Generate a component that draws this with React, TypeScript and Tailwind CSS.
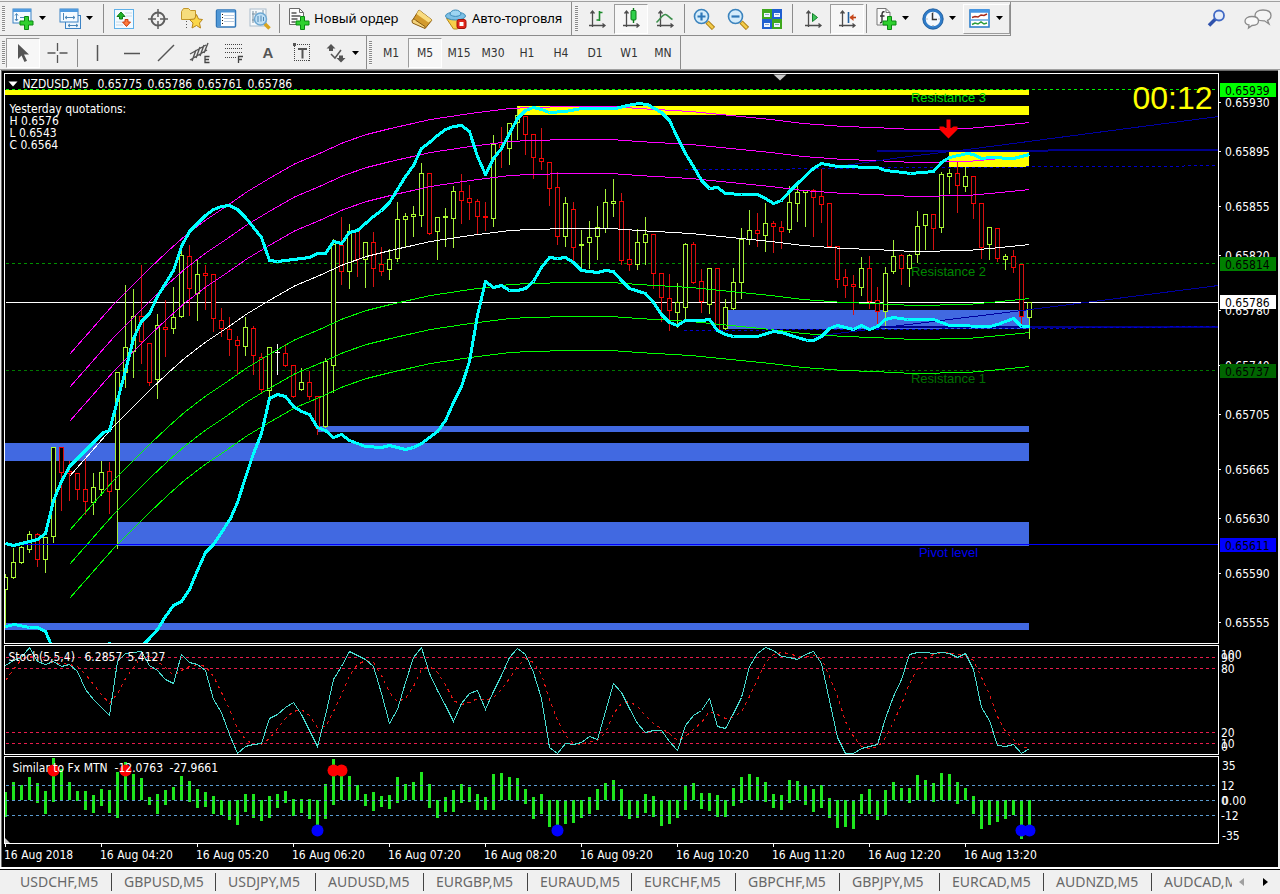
import React from 'react';
import clsx from 'clsx';

// high, body top, body bottom, low, kind (1 = up, 0 = down, 2 = doji); one entry per 8px bar
const CANDLES: number[][] = [
    [573, 577, 589, 626, 1], [547, 562, 577, 577, 1], [545, 547, 562, 562, 1], [530, 534, 549, 551, 1],
    [532, 534, 559, 565, 0], [537, 537, 559, 571, 1], [447, 447, 536, 541, 1], [447, 447, 472, 509, 0],
    [460, 471, 473, 499, 0], [472, 473, 489, 498, 0], [457, 489, 501, 513, 0], [472, 487, 502, 513, 1],
    [460, 472, 489, 494, 1], [461, 471, 491, 512, 0], [372, 372, 489, 547, 1], [284, 347, 372, 386, 1],
    [288, 316, 351, 376, 1], [264, 316, 341, 362, 0], [342, 343, 382, 384, 0], [313, 325, 379, 397, 1],
    [299, 327, 329, 355, 0], [286, 317, 328, 332, 1], [248, 255, 316, 316, 1], [244, 256, 288, 314, 0],
    [259, 274, 293, 319, 1], [264, 273, 275, 308, 0], [274, 274, 318, 330, 0], [307, 320, 328, 335, 0],
    [316, 329, 339, 354, 0], [335, 340, 345, 373, 0], [316, 327, 346, 354, 1], [325, 328, 355, 373, 0],
    [352, 357, 389, 392, 0], [347, 347, 390, 397, 1], [343, 352, 352, 373, 2], [343, 353, 365, 365, 0],
    [365, 365, 396, 396, 0], [367, 382, 389, 389, 1], [370, 382, 396, 398, 0], [396, 396, 427, 433, 0],
    [357, 361, 426, 426, 1], [238, 244, 365, 391, 1], [216, 245, 271, 283, 0], [223, 231, 271, 287, 1],
    [231, 231, 259, 275, 0], [242, 242, 259, 286, 1], [231, 242, 268, 285, 0], [246, 264, 271, 274, 0],
    [248, 259, 269, 278, 1], [201, 219, 258, 260, 1], [212, 216, 219, 246, 1], [205, 214, 216, 235, 1],
    [162, 173, 215, 225, 1], [173, 173, 233, 233, 0], [217, 217, 231, 258, 1], [207, 216, 217, 245, 1],
    [185, 191, 218, 246, 1], [173, 191, 200, 222, 0], [184, 198, 202, 218, 0], [198, 201, 216, 232, 0],
    [201, 216, 217, 229, 0], [134, 144, 218, 225, 1], [126, 144, 147, 166, 0], [122, 123, 148, 163, 1],
    [106, 115, 122, 138, 1], [116, 116, 134, 153, 0], [134, 134, 157, 177, 0], [127, 158, 161, 168, 0],
    [162, 162, 188, 204, 0], [171, 187, 236, 243, 0], [196, 203, 236, 245, 1], [201, 209, 247, 261, 0],
    [229, 244, 245, 267, 1], [220, 237, 242, 267, 1], [205, 227, 236, 258, 1], [188, 202, 228, 231, 1],
    [178, 201, 203, 215, 1], [192, 201, 260, 263, 0], [228, 259, 264, 269, 0], [228, 242, 264, 268, 1],
    [216, 234, 242, 263, 1], [234, 234, 273, 287, 0], [273, 273, 297, 320, 0], [273, 298, 310, 329, 0],
    [282, 302, 312, 326, 1], [242, 244, 307, 317, 1], [241, 244, 282, 282, 0], [268, 281, 301, 311, 0],
    [267, 268, 304, 312, 1], [268, 268, 329, 329, 0], [298, 307, 328, 328, 1], [267, 282, 308, 308, 1],
    [227, 239, 282, 297, 1], [209, 230, 239, 243, 1], [212, 230, 233, 245, 0], [202, 223, 235, 250, 1],
    [220, 223, 226, 251, 0], [220, 227, 231, 247, 0], [185, 202, 229, 231, 1], [183, 192, 203, 220, 1],
    [189, 190, 192, 225, 1], [188, 190, 197, 235, 0], [168, 196, 204, 221, 0], [203, 203, 246, 246, 0],
    [246, 246, 279, 286, 0], [268, 277, 285, 296, 0], [274, 284, 286, 313, 0], [256, 268, 287, 294, 1],
    [255, 268, 301, 307, 0], [286, 300, 311, 326, 0], [266, 273, 311, 327, 1], [239, 256, 271, 272, 1],
    [253, 255, 268, 283, 0], [253, 255, 268, 285, 1], [210, 226, 254, 261, 1], [213, 214, 225, 248, 1],
    [213, 214, 228, 248, 0], [171, 174, 227, 231, 1], [168, 173, 176, 192, 1], [160, 173, 185, 211, 0],
    [166, 176, 186, 190, 1], [176, 176, 203, 217, 0], [203, 203, 247, 257, 0], [227, 227, 244, 258, 1],
    [227, 228, 258, 260, 0], [253, 256, 259, 268, 1], [249, 256, 267, 271, 0], [264, 264, 316, 324, 0],
    [302, 302, 317, 337, 1],
];

const UPPER_BAND =
    '5,543 13,545 21,543 29,541 37,539 45,533 53,500 61,481 69,466 103,432 109,430 117,400 125,370 133,338 141,321 149,313 157,296 165,283 173,270 181,246 189,231 197,223 205,215 213,209 221,206 229,205 237,209 245,217 253,227 261,237 269,260 277,261 293,259 309,257 317,253 325,253 333,241 341,243 349,232 357,230 365,223 373,216 381,210 389,202 397,189 405,176 413,165 421,148 429,142 437,135 445,129 453,126 461,125 469,131 477,156 485,174 493,158 501,148 509,133 517,118 525,110 533,107 541,109 549,112 565,111 581,108 615,108 627,105 638,103 647,104 661,112 669,120 677,137 685,153 693,166 701,180 709,188 717,187 725,193 741,194 757,194 765,198 773,203 781,200 789,191 797,183 813,168 821,163 837,166 877,167 885,170 903,172 910,173 933,171 941,162 949,157 967,153 973,154 981,158 990,157 1013,158 1029,154';
const LOWER_BAND =
    '5,626 14,624 29,627 37,627 45,631 51,645 60,660 100,660 109,643 117,660 140,647 149,638 157,629 165,616 173,605 181,601 189,589 197,570 205,552 213,544 221,532 230,518 237,502 245,477 253,453 261,433 269,398 277,394 285,396 293,406 301,411 309,414 317,427 325,430 333,437 341,434 349,440 365,446 381,447 389,445 405,449 413,447 421,443 437,431 445,420 453,402 461,386 469,361 477,315 485,281 493,287 501,285 509,290 517,290 525,288 533,281 541,267 549,257 557,258 565,257 573,262 581,270 589,271 597,272 605,270 613,271 621,280 629,288 645,293 653,302 661,314 669,322 677,325 685,320 701,320 709,319 717,330 725,334 733,336 757,336 773,331 781,332 797,337 807,340 813,340 821,336 829,328 837,325 853,329 861,325 869,329 877,326 885,319 893,317 907,319 933,319 949,325 990,326 997,324 1013,318 1021,326 1029,326';
const CHANNEL =
    '69,354 91,329 113,304 131,286 149,268 167,251 185,235 206,219 227,205 247,191 267,179 295,163 319,153 343,142 366,134 390,128 430,119 470,113 510,108 530,107 570,106 610,106 638,108 690,111 730,115 770,119 803,123 843,126 873,127 913,129 967,128 1000,125 1029,122';
const CHANNEL_LINES = [
    { shift: 0, color: '#f0f' }, { shift: 33, color: '#f0f' }, { shift: 67, color: '#f0f' },
    { shift: 122, color: '#fff' },
    { shift: 176, color: '#0f0' }, { shift: 210, color: '#0f0' }, { shift: 244, color: '#0f0' },
];

// x, y, height, color; every zone runs to the last bar
const ZONES: [number, number, number, string][] = [
    [5, 90, 5, '#ff0'], [517, 106, 9, '#ff0'], [949, 151, 16, '#ff0'],
    [728, 310, 19, '#4169e1'], [317, 426, 6, '#4169e1'], [5, 443, 18, '#4169e1'],
    [117, 522, 24, '#4169e1'], [5, 623, 7, '#4169e1'],
];

const STOCH_MAIN = [
    665, 660, 657, 647, 661, 664, 661, 666, 664, 671, 689, 699, 707, 715, 661, 653, 652, 651, 665, 670, 679, 683, 654, 662, 664, 670,
    699, 712, 734, 753, 746, 744, 743, 718, 714, 707, 702, 714, 730, 746, 715, 679, 666, 651, 655, 659, 666, 693, 723, 709, 682, 657,
    647, 673, 690, 705, 721, 703, 693, 690, 709, 691, 675, 657, 648, 654, 672, 698, 747, 753, 743, 744, 742, 736, 739, 711, 683, 692,
    708, 723, 732, 730, 730, 741, 750, 725, 715, 710, 698, 726, 728, 713, 697, 666, 653, 647, 650, 656, 657, 659, 654, 651, 663, 700,
    737, 753, 753, 748, 746, 744, 718, 696, 679, 654, 652, 652, 653, 652, 653, 657, 653, 669, 707, 720, 745, 746, 744, 753, 748,
];
const STOCH_SIGNAL = [
    680, 669, 659, 656, 657, 660, 662, 663, 664, 666, 674, 684, 694, 703, 693, 678, 667, 656, 656, 661, 667, 675, 670, 666, 664, 666,
    676, 692, 709, 728, 739, 744, 744, 738, 728, 718, 711, 709, 715, 727, 726, 711, 694, 675, 664, 660, 662, 675, 692, 701, 698, 686,
    669, 666, 672, 684, 700, 704, 702, 698, 700, 697, 689, 678, 666, 658, 662, 674, 699, 720, 735, 743, 744, 741, 740, 732, 713, 703,
    701, 706, 715, 723, 728, 733, 740, 736, 729, 722, 711, 714, 718, 717, 711, 696, 679, 662, 654, 652, 653, 656, 656, 655, 658, 676,
    696, 721, 736, 746, 748, 747, 737, 722, 704, 683, 668, 658, 654, 652, 652, 654, 655, 660, 677, 694, 716, 731, 739, 746, 748,
];

// top and bottom of every histogram bar
const HISTOGRAM: [number, number][] = [
    [792, 817], [782, 800], [785, 800], [777, 800], [783, 803], [791, 814], [758, 802], [769, 800], [782, 800], [791, 801],
    [791, 810], [795, 813], [789, 806], [790, 813], [772, 818], [762, 800], [774, 800], [778, 800], [797, 805], [794, 814],
    [790, 805], [787, 800], [776, 800], [781, 802], [789, 808], [792, 807], [796, 814], [800, 815], [800, 820], [800, 825],
    [794, 812], [794, 818], [800, 821], [796, 818], [794, 808], [791, 803], [799, 816], [799, 813], [799, 819], [800, 826],
    [784, 819], [759, 805], [770, 800], [776, 800], [785, 800], [794, 806], [792, 811], [796, 807], [795, 809], [777, 803],
    [784, 800], [782, 800], [772, 800], [784, 808], [800, 818], [797, 812], [790, 812], [784, 803], [787, 802], [794, 810],
    [797, 810], [774, 810], [773, 800], [777, 800], [778, 800], [789, 804], [797, 819], [794, 814], [800, 827], [800, 826],
    [800, 824], [800, 823], [800, 818], [797, 814], [789, 810], [783, 800], [780, 800], [789, 816], [800, 819], [800, 818],
    [794, 813], [796, 817], [800, 826], [800, 824], [800, 818], [785, 810], [783, 800], [793, 809], [793, 811], [795, 817],
    [800, 817], [788, 806], [777, 803], [774, 800], [777, 800], [782, 802], [794, 808], [795, 810], [780, 803], [781, 800],
    [786, 805], [789, 812], [785, 808], [798, 818], [800, 828], [800, 827], [800, 829], [794, 814], [789, 814], [800, 820],
    [790, 815], [782, 800], [788, 800], [788, 803], [775, 800], [780, 800], [783, 802], [773, 800], [774, 800], [782, 804],
    [788, 800], [796, 814], [800, 829], [800, 825], [800, 822], [800, 819], [800, 815], [800, 839], [800, 825],
];

const PRICES: [string, number][] = [
    ['0.65930', 102], ['0.65895', 151], ['0.65855', 206], ['0.65820', 255], ['0.65780', 310], ['0.65740', 365],
    ['0.65705', 414], ['0.65665', 469], ['0.65630', 518], ['0.65590', 573], ['0.65555', 622],
];
const PRICE_TAGS = [
    { text: '0.65939', y: 90, bg: '#0f0', color: '#000' },
    { text: '0.65814', y: 264, bg: '#008000', color: '#000' },
    { text: '0.65786', y: 302, bg: '#fff', color: '#000' },
    { text: '0.65737', y: 371, bg: '#006400', color: '#000' },
    { text: '0.65611', y: 545, bg: '#00f', color: '#000' },
];
const QUOTES: [string, number][] = [['0.65775', 97], ['0.65786', 147], ['0.65761', 197], ['0.65786', 247]];
const TIMES = ['2018', '04:20', '05:20', '06:20', '07:20', '08:20', '09:20', '10:20', '11:20', '12:20', '13:20'];

const TABS: [string, string][] = [
    ['USDCHF,M5', 'w-[104px]'], ['GBPUSD,M5', 'w-[104px]'], ['USDJPY,M5', 'w-[100px]'], ['AUDUSD,M5', 'w-[108px]'],
    ['EURGBP,M5', 'w-[104px]'], ['EURAUD,M5', 'w-[104px]'], ['EURCHF,M5', 'w-[104px]'], ['GBPCHF,M5', 'w-[104px]'],
    ['GBPJPY,M5', 'w-[100px]'], ['EURCAD,M5', 'w-[104px]'], ['AUDNZD,M5', 'w-[108px]'], ['AUDCAD,M5', 'w-[108px]'],
];

const barX = (i: number) => 5 + i * 8;
const toPoints = (ys: number[]) => ys.map((y, i) => `${barX(i)},${y}`).join(' ');

/* ---------- toolbar icons ---------- */

const Icon = ({ children }: { children: React.ReactNode }) => (
    <svg width="22" height="22" viewBox="0 0 22 22" fill="none" className="shrink-0">{children}</svg>
);

const GreenPlus = () => (
    <path d="M12.5 8.500h4v4.500h4.500v4h-4.500v4.500h-4v-4.500H8v-4h4.500z" fill="#2fd02f" stroke="#0a8a12" />
);

const Axes = () => (
    <path d="M6.5 3v16M3 17.5h16M4.5 5.5l2-2.5 2 2.5M16.5 15.5l2.5 2-2.5 2" stroke="#4d4d4d" strokeWidth="1.3" />
);

const IconNewChart = () => (
    <Icon>
        <rect x="1" y="1" width="18" height="14" fill="#f4faff" stroke="#3b82c4" />
        <path d="M1 2.5h18" stroke="#4f9be0" strokeWidth="3" />
        <path d="M4.5 6v6M3 7.5l1.5-2 1.5 2M3 11l1.5 2 1.5-2M8 9.5h5" stroke="#4a86b8" />
        <GreenPlus />
    </Icon>
);
const IconProfiles = () => (
    <Icon>
        <rect x="6.5" y="7.5" width="15" height="13" fill="#eef6fd" stroke="#3b82c4" />
        <path d="M9 17.5h10M11 16l-2 1.5 2 1.5M17 16l2 1.5-2 1.5" stroke="#4a86b8" />
        <rect x="1" y="1" width="18" height="13" fill="#f4faff" stroke="#3b82c4" />
        <path d="M1 2.5h18" stroke="#4f9be0" strokeWidth="3" />
        <path d="M4.5 5v7M6 9.5h10M8 8l-2 1.5 2 1.5M14 8l2 1.5-2 1.5" stroke="#4a86b8" />
    </Icon>
);
const IconMarket = () => (
    <Icon>
        <rect x="1.5" y="1.5" width="19" height="19" fill="#f3faff" stroke="#5fb0e8" />
        <path d="M12 5h7M13 8h6M3 14h6M3 17h7" stroke="#c8d8e4" />
        <path d="M8 4l4 4.5H9.5v2.500h-3V8.500H4z" fill="#21b32a" stroke="#0d7a15" />
        <path d="M13.5 18.5l-4-4.5H12v-2.500h3V14h2.500z" fill="#ff7a3c" stroke="#c83c10" />
    </Icon>
);
const IconTarget = () => (
    <Icon>
        <circle cx="11" cy="11" r="6.5" stroke="#5e5e5e" strokeWidth="2" />
        <path d="M11 1v8M11 13v8M1 11h8M13 11h8" stroke="#5e5e5e" strokeWidth="1.5" />
    </Icon>
);
const IconFavorites = () => (
    <Icon>
        <path d="M.5 3.5l2-3h5l2 2h5v9H.5z" fill="#f6dc7c" stroke="#c2962a" />
        <path d="M5.5 13v8" stroke="#555" strokeDasharray="1 2" />
        <path d="M15.5 6.5l2 4.5 4 .5-3 3.500 1 5-4-2.500-4.500 2.500 1-5-3.500-3.500 5-.5z" fill="#fbd749" stroke="#b8861b" />
    </Icon>
);
const IconNavigator = () => (
    <Icon>
        <rect x="1.5" y="2" width="19" height="17" rx="1" fill="#fff" stroke="#2f76b8" strokeWidth="1.5" />
        <path d="M4 3v15" stroke="#4f97d6" strokeWidth="4" />
        <path d="M2 3.5h18" stroke="#4f97d6" strokeWidth="2" />
        <path d="M9 7.5h10M9 10.5h10M9 13.5h10" stroke="#b9cbe0" />
        <path d="M7.5 6v11" stroke="#111" strokeDasharray="1 2" />
    </Icon>
);
const IconTester = () => (
    <Icon>
        <rect x="1" y="1" width="16" height="17" fill="#f6f9fb" stroke="#a9bccb" />
        <path d="M4 3v12M3 6h3M7 3v5M3 12h4M14 2v5" stroke="#7790a3" />
        <path d="M15.5 15.5l5 5" stroke="#d9a520" strokeWidth="3.5" />
        <circle cx="11.5" cy="11" r="6" fill="#bfe0f6" stroke="#6ea8d2" strokeWidth="1.5" />
        <path d="M9 8v6M12 7.5v6M14.5 9v4" stroke="#4f87b4" />
    </Icon>
);
const IconOrder = () => (
    <Icon>
        <path d="M1.5.5h10l4 4v12h-14z" fill="#fdfdfd" stroke="#6a6a6a" />
        <path d="M11.5.5v4h4" stroke="#6a6a6a" />
        <path d="M3.5 5h5M3.5 8h9M3.5 11h6M3.5 14h4" stroke="#555" strokeWidth="1.5" />
        <GreenPlus />
    </Icon>
);
const IconBook = () => (
    <Icon>
        <path d="M1 13L8 2l13 10-6.500 8z" fill="#d39a2c" stroke="#8a5d12" />
        <path d="M8 2l13 10-3.500 2.500L5.500 6z" fill="#f9dc80" />
        <path d="M1 13c.5-2 3-2.500 4-.5L14 18.500v2L1.500 15z" fill="#f3d27a" stroke="#8a5d12" />
    </Icon>
);
const IconExpert = () => (
    <Icon>
        <path d="M1.5 10.500l17 0-6 10.500h-4z" fill="#f7cf4a" stroke="#b68818" />
        <ellipse cx="10.5" cy="8" rx="10" ry="4" fill="#7cc0e6" stroke="#3d8bb8" />
        <path d="M5 6.5C5 .5 16 .5 16 6.5c-3 2.500-8 2.500-11 0z" fill="#9dd5f2" stroke="#3d8bb8" />
        <rect x="12" y="11.5" width="9" height="9" rx="2" fill="#e0261a" stroke="#a01008" />
        <rect x="14.5" y="14" width="4" height="4" fill="#fff" />
    </Icon>
);
const IconBars = () => (
    <Icon>
        <Axes />
        <path d="M13.5 3v10M10.5 12h3M13.5 4.5h3" stroke="#1b8a2a" strokeWidth="1.6" />
    </Icon>
);
const IconCandles = () => (
    <Icon>
        <Axes />
        <path d="M13.5 0v15" stroke="#0b7a18" strokeWidth="1.4" />
        <rect x="11" y="2.5" width="5" height="9.5" rx="1" fill="#2fd04a" stroke="#0b7a18" />
    </Icon>
);
const IconLine = () => (
    <Icon>
        <Axes />
        <path d="M2.5 14.5C7 10 9 6 11.5 6.5s4 3.5 7 5" stroke="#3c8f4c" strokeWidth="1.5" />
    </Icon>
);
const IconZoom = ({ plus }: { plus?: boolean }) => (
    <Icon>
        <path d="M14 14l6.5 6.5" stroke="#a97a10" strokeWidth="4.5" />
        <path d="M14.5 14.5l5.5 5.5" stroke="#f2cb4a" strokeWidth="2.5" />
        <circle cx="8.5" cy="8.5" r="7" fill="#d4ecfb" stroke="#3b83bd" strokeWidth="1.6" />
        <path d={plus ? 'M4.5 8.5h8M8.5 4.5v8' : 'M4.5 8.5h8'} stroke="#2f78b8" strokeWidth="2.2" />
    </Icon>
);
const IconTiles = () => (
    <Icon>
        <rect x="1" y="1" width="10" height="10" fill="#3fa81e" />
        <rect x="11" y="1" width="10" height="10" fill="#1f5fd0" />
        <rect x="1" y="11" width="10" height="10" fill="#1f5fd0" />
        <rect x="11" y="11" width="10" height="10" fill="#3fa81e" />
        <path d="M3 5h6v4H3zM13 5h6v4h-6zM3 15h6v4H3zM13 15h6v4h-6z" fill="#eef6ff" />
        <path d="M4 6.5h4M14 6.500h4M4 16.5h4M14 16.5h4" stroke="#8aa8c8" />
    </Icon>
);
const IconScroll = () => (
    <Icon>
        <Axes />
        <path d="M10.5 5.5v8l5-4z" fill="#3fc45a" stroke="#12802a" />
    </Icon>
);
const IconShift = () => (
    <Icon>
        <Axes />
        <path d="M12.5 4v11" stroke="#1f5e9e" strokeWidth="1.6" />
        <path d="M14 9.5h6" stroke="#b83a10" strokeWidth="1.6" />
        <path d="M17.500 6v7L13.500 9.500z" fill="#c8481a" />
    </Icon>
);
const IconIndicators = () => (
    <Icon>
        <path d="M2 .5h9l4 4v12.5H2z" fill="#fafafa" stroke="#777" />
        <path d="M11 .5v4h4" stroke="#777" />
        <path d="M9.5 4c-2-1-2.5 1-2.5 3v6c0 1.5-1 2-2 1.5M5 8h4.5" stroke="#333" strokeWidth="1.4" />
        <GreenPlus />
    </Icon>
);
const IconClock = () => (
    <Icon>
        <circle cx="11" cy="11" r="8.8" fill="#f4f9fe" stroke="#2f7cc9" strokeWidth="3" />
        <circle cx="11" cy="11" r="10.2" stroke="#1b5795" strokeWidth=".8" />
        <path d="M10.5 5v6.5h4.5" stroke="#333" strokeWidth="1.5" />
        <path d="M11 4v1M11 17v1M4.5 11h1M16.5 11h1" stroke="#888" />
    </Icon>
);
const IconTemplate = () => (
    <Icon>
        <rect x="1" y="2" width="19" height="17" fill="#fff" stroke="#2f80cc" strokeWidth="1.6" />
        <path d="M1 3h19" stroke="#4496e4" strokeWidth="3.5" />
        <path d="M1 12h19" stroke="#5da5e2" strokeWidth="1.5" />
        <path d="M3 9.500l3-1 3 .5 3-2 3 .5 3-1.500" stroke="#a82a1a" strokeWidth="1.5" />
        <path d="M3 16.500l3-1.500 3 1 3-2 3 2 3-1" stroke="#2c9c3c" strokeWidth="1.5" />
    </Icon>
);
const IconSearch = () => (
    <Icon>
        <path d="M3 17.5l6.5-6.5" stroke="#2f52ac" strokeWidth="3.5" />
        <circle cx="13" cy="7.5" r="5" fill="#e6edf9" stroke="#4169c4" strokeWidth="1.8" />
    </Icon>
);
const IconChat = () => (
    <svg width="28" height="22" viewBox="0 0 28 22" fill="none">
        <path d="M19 2c5 0 8 2 8 5.5 0 2.5-1.5 4-3.5 4.8l1.5 3.7-4.5-3.2C14 13 11 11 11 7.5S14 2 19 2z" fill="#f4f4f4" stroke="#8a8a8a" strokeWidth="1.3" />
        <path d="M8 8.5c4 0 6.5 1.8 6.5 4.5S12 17.5 8 17.5l-3.5 2.5.5-3C2.5 16.5 1 15 1 13c0-2.7 3-4.5 7-4.5z" fill="#f8f8f8" stroke="#8a8a8a" strokeWidth="1.3" />
    </svg>
);

const IconCursor = () => (
    <Icon><path d="M6 2v15l3.5-3.5 3 6.5 2.5-1.2-3-6.3H17z" fill="#555" /></Icon>
);
const IconCross = () => (
    <Icon><path d="M11.5 1v8M11.5 13v8M1.5 11h8M13.5 11h8" stroke="#555" strokeWidth="1.3" /></Icon>
);
const IconVLine = () => (
    <Icon><path d="M10.5 3v16" stroke="#555" strokeWidth="1.5" /></Icon>
);
const IconHLine = () => (
    <Icon><path d="M3 11.5h16" stroke="#555" strokeWidth="1.5" /></Icon>
);
const IconTrend = () => (
    <Icon><path d="M3 19L19 3" stroke="#555" strokeWidth="1.5" /></Icon>
);
const IconChannel = () => (
    <Icon>
        <path d="M1 12L17 3M1 18L18 8M3 19l4-11M7 16l4-11M11 14l4-11M15 11l4-10" stroke="#555" strokeWidth="1.4" />
        <path d="M20.5 14.5H16v6h4.5M16 17.5h4" stroke="#444" strokeWidth="1.3" />
    </Icon>
);
const IconFibo = () => (
    <Icon>
        <path d="M2 2.5h18M2 6.5h18M2 10.5h18M2 15.5h11" stroke="#444" strokeDasharray="1 1" />
        <path d="M15.5 21v-6.5H20M15.5 17.5H19" stroke="#444" strokeWidth="1.3" />
    </Icon>
);
const IconLabel = () => (
    <Icon>
        <rect x="3.5" y="2.5" width="15" height="16" stroke="#444" strokeDasharray="1 1" shapeRendering="crispEdges" />
        <path d="M2 1h3v3H2z" fill="#555" />
        <path d="M7 7h9M11.5 7v9.5" stroke="#555" strokeWidth="2" />
    </Icon>
);
const IconShapes = () => (
    <Icon>
        <path d="M6 2l4.500 4.500H8V9H4V6.500H1.500zM16 20.500L11.500 16H14v-2.500h4V16h2.500z" fill="#555" />
        <path d="M6 12l4 4 6-8" stroke="#555" strokeWidth="1.5" />
    </Icon>
);

/* ---------- toolbar pieces ---------- */

const Grip = () => (
    <div className="mx-[2px] my-[4px] w-[3px] shrink-0 self-stretch bg-[repeating-linear-gradient(to_bottom,#8a8a8a_0px,#8a8a8a_1px,#f8f8f8_1px,#f8f8f8_2px)]" />
);
const Sep = ({ wide }: { wide?: boolean }) => (
    <div className={clsx('flex shrink-0 justify-center self-stretch py-[2px]', wide ? 'w-[7px]' : 'w-[5px]')}>
        <div className="w-px bg-[#8c8c8c]" />
    </div>
);

interface ToolProps {
    label: string;
    pressed?: boolean;
    children: React.ReactNode;
}

const Tool = ({ label, pressed, children }: ToolProps) => (
    <button
        title={label}
        aria-label={label}
        className={clsx(
            'flex h-[30px] w-[34px] shrink-0 items-center justify-center border',
            pressed ? 'border-t-[#9c9c9c] border-r-white border-b-white border-l-[#9c9c9c] bg-[#f7f7f7]' : 'border-transparent',
        )}
    >
        {children}
    </button>
);

const DropTool = ({ label, raised, children }: ToolProps & { raised?: boolean }) => (
    <button
        title={label}
        aria-label={label}
        className={clsx(
            'flex h-[30px] w-[47px] shrink-0 items-center gap-[5px] border pl-[5px]',
            raised ? 'border-t-white border-r-[#9c9c9c] border-b-[#9c9c9c] border-l-white' : 'border-transparent',
        )}
    >
        {children}
        <svg width="8" height="5" viewBox="0 0 8 5"><path d="M0 0h7L3.5 4z" fill="#000" /></svg>
    </button>
);

const TopToolbar = () => (
    <div className="flex items-center justify-between pr-2">
        <div className="flex h-[34px]">
            <div className="flex items-center border-r border-b border-[#8c8c8c]">
                <Grip />
                <div className="-ml-px flex items-center self-stretch">
                    <DropTool label="Новый график"><IconNewChart /></DropTool>
                    <DropTool label="Профили"><IconProfiles /></DropTool>
                    <Sep wide />
                    <Tool label="Обзор рынка"><IconMarket /></Tool>
                    <Tool label="Окно данных"><IconTarget /></Tool>
                    <Tool label="Избранное"><IconFavorites /></Tool>
                    <Tool label="Навигатор"><IconNavigator /></Tool>
                    <Tool label="Тестер стратегий"><IconTester /></Tool>
                    <Sep />
                    <button className="flex h-[30px] w-[123px] items-center gap-1 pl-[6px] font-['Noto_Sans',sans-serif] text-[13px] whitespace-nowrap text-black">
                        <IconOrder />
                        Новый ордер
                    </button>
                    <Tool label="Редактор"><IconBook /></Tool>
                    <button className="flex h-[30px] w-[132px] items-center gap-[5px] pl-[6px] font-['Noto_Sans',sans-serif] text-[13px] whitespace-nowrap text-black">
                        <IconExpert />
                        Авто-торговля
                    </button>
                </div>
            </div>
            <div className="flex items-center border-r border-b border-[#8c8c8c] pl-px">
                <Grip />
                <Tool label="Бары"><IconBars /></Tool>
                <Tool label="Японские свечи" pressed><IconCandles /></Tool>
                <Tool label="Линия"><IconLine /></Tool>
                <Sep />
                <Tool label="Увеличить"><IconZoom plus /></Tool>
                <Tool label="Уменьшить"><IconZoom /></Tool>
                <Tool label="Окна мозаикой"><IconTiles /></Tool>
                <Sep wide />
                <Tool label="Автопрокрутка"><IconScroll /></Tool>
                <Tool label="Сдвиг графика" pressed><IconShift /></Tool>
                <Sep />
                <DropTool label="Индикаторы"><IconIndicators /></DropTool>
                <DropTool label="Периоды"><IconClock /></DropTool>
                <DropTool label="Шаблоны" raised><IconTemplate /></DropTool>
            </div>
        </div>
        <div className="flex items-center gap-4">
            <button title="Поиск" aria-label="Поиск"><IconSearch /></button>
            <button title="Сообщения" aria-label="Сообщения"><IconChat /></button>
        </div>
    </div>
);

const TIMEFRAMES = ['M1', 'M5', 'M15', 'M30', 'H1', 'H4', 'D1', 'W1', 'MN'];

const DrawToolbar = () => (
    <div className="flex h-[33px]">
        <div className="flex items-center border-r border-[#8c8c8c] pt-px">
            <Grip />
            <div className="-ml-px flex items-center self-stretch">
                <Tool label="Курсор" pressed><IconCursor /></Tool>
                <Tool label="Перекрестие"><IconCross /></Tool>
                <Sep wide />
                <Tool label="Вертикальная линия"><IconVLine /></Tool>
                <Tool label="Горизонтальная линия"><IconHLine /></Tool>
                <Tool label="Трендовая линия"><IconTrend /></Tool>
                <Tool label="Канал"><IconChannel /></Tool>
                <Tool label="Фибоначчи"><IconFibo /></Tool>
                <Tool label="Текст">
                    <span className="font-['Liberation_Sans',sans-serif] text-[15px] font-bold text-[#555]">A</span>
                </Tool>
                <Tool label="Метка"><IconLabel /></Tool>
                <DropTool label="Стрелки"><IconShapes /></DropTool>
            </div>
        </div>
        <div className="flex items-center border-r border-[#8c8c8c] pt-px">
            <Grip />
            {TIMEFRAMES.map(tf => (
                <Tool key={tf} label={tf} pressed={tf === 'M5'}>
                    <span className="font-['DejaVu_Sans_Condensed','DejaVu_Sans',sans-serif] text-[12px] text-[#333]">{tf}</span>
                </Tool>
            ))}
        </div>
    </div>
);

/* ---------- chart ---------- */

const Candle = ({ x, data }: { x: number, data: number[] }) => {
    const [high, top, bottom, low, kind] = data;
    const edge = kind === 1 ? '#adff2f' : kind === 2 ? '#fff' : '#f00';
    const side = kind === 1 ? '#a6f03a' : kind === 2 ? '#fff' : '#d41212';
    return (
        <g>
            <path d={`M${x} ${high}V${low + 1}`} stroke={side} />
            {bottom - top > 1 && <rect x={x - 2} y={top} width="4" height={bottom - top} fill="#000" stroke={side} />}
            <path d={`M${x - 2.5} ${top}h5M${x - 2.5} ${bottom}h5`} stroke={edge} />
        </g>
    );
};

const LevelText = ({ y, color, children }: { y: number, color: string, children: string }) => (
    <text x="948" y={y} fill={color} textAnchor="middle" className="font-['Liberation_Sans',sans-serif] text-[13px]">{children}</text>
);

// plots share one coordinate space, each panel shows its own slice of it
const Plot = ({ top, height, label, children }: { top: number, height: string, label: string, children: React.ReactNode }) => (
    <div className="min-w-0 flex-1 border border-white">
        <svg role="img" aria-label={label} className={clsx('block w-full', height)} fill="none">
            <g transform={`translate(-4.5 ${0.5 - top})`}>{children}</g>
        </svg>
    </div>
);
const Scale = ({ top, height, children }: { top: number, height: string, children: React.ReactNode }) => (
    <svg className={clsx('block w-[59px] shrink-0', height)} fill="#fff">
        <g transform={`translate(-1219 ${-top})`}>{children}</g>
    </svg>
);

const MainPanel = () => (
    <div className="flex">
        <Plot top={74} height="h-[569px]" label="NZDUSD,M5">
            <g shapeRendering="crispEdges">
                {ZONES.map(([x, y, h, color], i) => (
                    <rect key={i} x={x - 0.5} y={y - 0.5} width={1029 - x} height={h} fill={color} />
                ))}
                <path d="M5 89H1218" stroke="#00f000" strokeDasharray="3 3" />
                <path d="M5 263H1218" stroke="#009000" strokeDasharray="3 3" />
                <path d="M5 370H1218" stroke="#007800" strokeDasharray="3 3" />
                <path d="M5 302H1218" stroke="#fff" />
                {CANDLES.map((c, i) => <Candle key={i} x={barX(i)} data={c} />)}
                {CHANNEL_LINES.map(l => (
                    <polyline key={l.shift} points={CHANNEL} stroke={l.color} transform={`translate(0 ${l.shift})`} />
                ))}
                <path d="M5 544H1218" stroke="#00f" />
                <path d="M877 151L1218 149M877 326H1218" stroke="#00008b" strokeWidth="2" />
                <path d="M837 166L900 157 967 149 1218 116M813 336L900 325 1030 309 1218 285" stroke="#0000a0" />
                <path d="M684 169H752L900 167 1150 166 1218 165M684 330L1029 328 1218 326" stroke="#0000cd" strokeDasharray="3 3" />
                <polyline points={UPPER_BAND} stroke="#0ff" strokeWidth="3" strokeLinejoin="round" />
                <polyline points={LOWER_BAND} stroke="#0ff" strokeWidth="3" strokeLinejoin="round" />
            </g>
            <path d="M946 119h4v9l3-2h4v3l-9 9-9-9v-3h4l3 2z" fill="#f00" />
            <LevelText y={101} color="#00e000">Resistance 3</LevelText>
            <LevelText y={275} color="#008800">Resistance 2</LevelText>
            <LevelText y={382} color="#007000">Resistance 1</LevelText>
            <LevelText y={556} color="#0000f0">Pivot level</LevelText>
            <path d="M8 81h9l-4.5 5z" fill="#fff" />
            <path d="M773 74h13l-6.5 6z" fill="#c8c8c8" />
            <g fill="#fff">
                <text x="22" y="87">NZDUSD,M5</text>
                {QUOTES.map(([text, x]) => <text key={x} x={x} y="87">{text}</text>)}
                <text x="9" y="112">Yesterday quotations:</text>
                <text x="9" y="124">H 0.6576</text>
                <text x="9" y="136">L 0.6543</text>
                <text x="9" y="148">C 0.6564</text>
            </g>
            <text x="1212" y="108" textAnchor="end" fill="#ff0" className="font-['Liberation_Sans',sans-serif] text-[32px]">00:12</text>
        </Plot>
        <Scale top={73} height="h-[571px]">
            {PRICES.map(([text, y]) => (
                <g key={text}>
                    <rect x="1219" y={y} width="2" height="1" />
                    <text x="1225" y={y + 5}>{text}</text>
                </g>
            ))}
            {PRICE_TAGS.map(t => (
                <g key={t.text}>
                    <rect x="1220" y={t.y - 7} width="56" height="14" fill={t.bg} />
                    <text x="1225" y={t.y + 5} fill={t.color}>{t.text}</text>
                </g>
            ))}
        </Scale>
    </div>
);

const StochPanel = () => (
    <div className="flex">
        <Plot top={646} height="h-[108px]" label="Stochastic">
            <g shapeRendering="crispEdges">
                {[657, 668, 732, 743].map(y => (
                    <path key={y} d={`M5 ${y}H1218`} stroke="#e81c4c" strokeDasharray="3 3" />
                ))}
                <polyline points={toPoints(STOCH_SIGNAL)} stroke="#e81414" strokeDasharray="3 4" />
                <polyline points={toPoints(STOCH_MAIN)} stroke="#48dcd0" />
            </g>
            <g fill="#fff">
                <text x="8" y="660">Stoch(5,5,4)</text>
                <text x="84" y="660">6.2857</text>
                <text x="127" y="660">5.4127</text>
            </g>
        </Plot>
        <Scale top={645} height="h-[110px]">
            <text x="1221" y="659">100</text>
            <text x="1221" y="662">90</text>
            <text x="1221" y="673">80</text>
            <text x="1221" y="737">20</text>
            <text x="1221" y="748">10</text>
            <text x="1221" y="751">0</text>
        </Scale>
    </div>
);

const FxPanel = () => (
    <div className="flex">
        <Plot top={757} height="h-[86px]" label="Similar to Fx MTN">
            <g shapeRendering="crispEdges">
                {HISTOGRAM.map(([top, bottom], i) => (
                    <rect key={i} x={barX(i) - 1.5} y={top - 0.5} width="3" height={bottom - top} fill="#1ee61e" />
                ))}
                {[785, 800, 815].map(y => (
                    <path key={y} d={`M5 ${y}H1218`} stroke="#5b9bd0" strokeDasharray="3 3" />
                ))}
            </g>
            {[53, 125, 333, 341].map(x => <circle key={x} cx={x} cy="770" r="6" fill="#f00" />)}
            {[317, 557, 1021, 1029].map(x => <circle key={x} cx={x} cy="830" r="6" fill="#00f" />)}
            <path d="M4 837v6h6z" fill="#c8c8c8" />
            <g fill="#fff">
                <text x="12" y="771">Similar to Fx MTN</text>
                <text x="114" y="771">-12.0763</text>
                <text x="169" y="771">-27.9661</text>
            </g>
        </Plot>
        <Scale top={756} height="h-[88px]">
            <text x="1222" y="770">35</text>
            <text x="1221" y="790">12</text>
            <text x="1221" y="805">0</text>
            <text x="1222" y="805">0.00</text>
            <text x="1221" y="820">-12</text>
            <text x="1222" y="840">-35</text>
        </Scale>
    </div>
);

const TimeAxis = () => (
    <div className="flex overflow-hidden">
        {TIMES.map(t => (
            <div key={t} className="w-[96px] shrink-0">
                <div className="ml-px h-[3px] w-px bg-white" />
                <div className="h-[20px] leading-[16px] whitespace-nowrap text-white">16 Aug {t}</div>
            </div>
        ))}
    </div>
);

const ChartTabs = () => (
    <div className="flex h-[24px] items-center bg-[#f0f0f0] pl-2">
        <nav className="flex min-w-0 flex-1 overflow-hidden">
            {TABS.map(([name, width]) => (
                <button
                    key={name}
                    className={clsx(
                        "h-[18px] shrink-0 border-r border-[#444] pl-3 text-left font-['Noto_Sans',sans-serif] text-[14px] leading-[16px] whitespace-nowrap text-[#686868]",
                        width,
                    )}
                >
                    {name}
                </button>
            ))}
        </nav>
        <div className="flex w-[48px] shrink-0 items-center justify-between pr-3 pl-[7px]">
            <button aria-label="Назад"><svg width="5" height="8"><path d="M5 0v8L0 4z" fill="#a0a0a0" /></svg></button>
            <button aria-label="Вперёд"><svg width="5" height="8"><path d="M0 0v8l5-4z" fill="#000" /></svg></button>
        </div>
    </div>
);

export default function App() {
    return (
        <div className="flex min-h-screen flex-col overflow-hidden bg-[#f0f0f0]">
            <header className="border-b border-[#a0a0a0]">
                <div className="mt-px border-t border-[#a0a0a0]">
                    <TopToolbar />
                    <DrawToolbar />
                </div>
            </header>
            <main className="pr-[2px] pl-px">
                <div className="border-t border-l border-[#696969]">
                    <div className="flex flex-col gap-px border-l border-black bg-black pt-[2px] pl-px font-['DejaVu_Sans_Condensed','DejaVu_Sans',sans-serif] text-[12px]">
                        <MainPanel />
                        <StochPanel />
                        <div>
                            <FxPanel />
                            <TimeAxis />
                        </div>
                    </div>
                </div>
            </main>
            <footer className="border-t-2 border-white">
                <div className="border-t border-black">
                    <ChartTabs />
                </div>
            </footer>
        </div>
    );
}
